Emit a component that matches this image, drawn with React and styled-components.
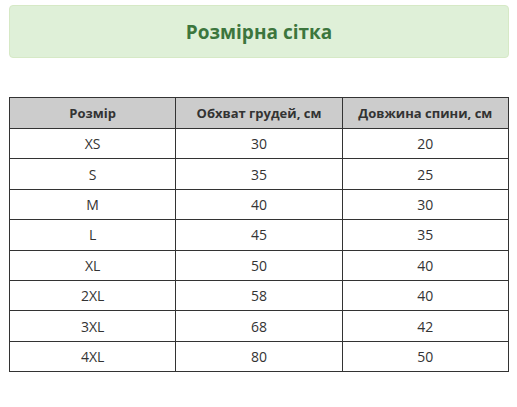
import React from 'react';
import styled, { createGlobalStyle } from 'styled-components';

const GlobalStyle = createGlobalStyle`
  body {
    margin: 0;
    background: #fff;
    font-family: "Open Sans", "Noto Sans", sans-serif;
    color: #333;
  }
`;

const Page = styled.div`
  padding: 5px 9px 0 9px;
  width: 500px;
`;

const Banner = styled.div`
  box-sizing: border-box;
  height: 53px;
  display: flex;
  align-items: center;
  justify-content: center;
  background: #dff0d8;
  border: 1px solid #d6e9c6;
  border-radius: 4px;
`;

const Title = styled.h2`
  margin: 0;
  font-size: 19px;
  font-weight: 700;
  color: #3c763d;
`;

const Table = styled.table`
  margin-top: 39px;
  width: 500px;
  border-collapse: collapse;
  table-layout: fixed;
`;

const Th = styled.th`
  height: 30px;
  padding: 0;
  background: #cccccc;
  border: 1px solid #333;
  font-size: 13px;
  font-weight: 700;
  color: #333;
  text-align: center;
`;

const Td = styled.td`
  height: 29.4px;
  padding: 0;
  border: 1px solid #333;
  font-size: 14px;
  text-align: center;
  color: #333;
`;

const rows = [
  ['XS', 30, 20],
  ['S', 35, 25],
  ['M', 40, 30],
  ['L', 45, 35],
  ['XL', 50, 40],
  ['2XL', 58, 40],
  ['3XL', 68, 42],
  ['4XL', 80, 50],
];

export default function App() {
  return (
    <Page>
      <GlobalStyle />
      <Banner>
        <Title>Розмірна сітка</Title>
      </Banner>
      <Table>
        <thead>
          <tr>
            <Th>Розмір</Th>
            <Th>Обхват грудей, см</Th>
            <Th>Довжина спини, см</Th>
          </tr>
        </thead>
        <tbody>
          {rows.map(([size, chest, back]) => (
            <tr key={size}>
              <Td>{size}</Td>
              <Td>{chest}</Td>
              <Td>{back}</Td>
            </tr>
          ))}
        </tbody>
      </Table>
    </Page>
  );
}
